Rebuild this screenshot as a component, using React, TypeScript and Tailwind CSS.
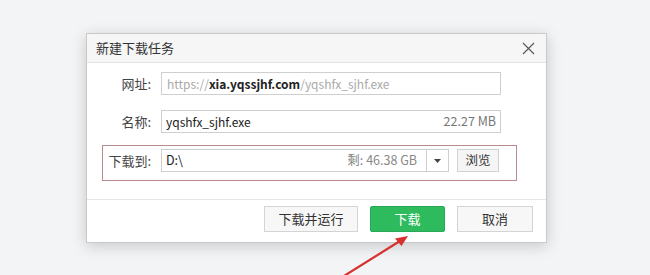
const font = {
  fontFamily: '"Noto Sans CJK SC", "Microsoft YaHei", "Noto Sans", sans-serif',
};

function Row({
  label,
  highlight,
  children,
  className,
}: {
  label: string;
  highlight?: boolean;
  children: React.ReactNode;
  className?: string;
}) {
  return (
    <div
      className={`flex h-[36px] w-[415px] items-start border pt-[3px] ${
        highlight ? "border-[#b98a8f]" : "border-transparent"
      } ${className ?? ""}`}
    >
      <div className="w-[48px] text-right text-[13px] leading-[23px] text-[#444]">
        {label}
      </div>
      <div className="ml-[10px] flex items-center">{children}</div>
    </div>
  );
}

export default function App() {
  return (
    <div
      className="relative h-[275px] w-[650px] overflow-hidden bg-[#f3f4f6] pl-[86px] pt-[33px]"
      style={font}
    >
      <div className="flex h-[210px] w-[461px] flex-col border border-[#c9c9c9] bg-white shadow-[0_3px_14px_rgba(0,0,0,0.18)]">
        {/* title bar */}
        <div className="flex h-[29px] shrink-0 items-center justify-between border-b border-[#e3e3e3] bg-[#f6f6f6] pl-[9px] pr-[11px]">
          <span className="text-[13px] text-[#333]">新建下载任务</span>
          <svg width="13" height="13" viewBox="0 0 13 13" className="text-[#555]">
            <path d="M1 1L12 12M12 1L1 12" stroke="currentColor" strokeWidth="1.1" />
          </svg>
        </div>

        {/* body */}
        <div className="flex-1 px-[15px] pt-[5px]">
          <Row label="网址:">
            <div className="flex h-[23px] w-[340px] items-center border border-[#cfcfcf] px-[5px] text-[12px] text-[#aaa]">
              https://
              <span className="font-semibold text-[#222]">xia.yqssjhf.com</span>
              /yqshfx_sjhf.exe
            </div>
          </Row>
          <Row label="名称:" className="mt-[2px]">
            <div className="flex h-[23px] w-[340px] items-center justify-between border border-[#cfcfcf] px-[4px] text-[12px] text-[#222]">
              <span>yqshfx_sjhf.exe</span>
              <span className="text-[12.5px] text-[#777]">22.27 MB</span>
            </div>
          </Row>
          <Row label="下载到:" highlight className="mt-[3px]">
            <div className="flex h-[23px] w-[288px] items-center border border-[#cfcfcf] text-[12.5px]">
              <span className="flex-1 pl-[4px] text-[#222]">D:\</span>
              <span className="pr-[9px] text-[#888]">剩: 46.38 GB</span>
              <div className="flex h-full w-[22px] items-center justify-center border-l border-[#cfcfcf]">
                <svg width="7" height="4" viewBox="0 0 7 4">
                  <path d="M0 0H7L3.5 4Z" fill="#444" />
                </svg>
              </div>
            </div>
            <div className="ml-[8px] flex h-[23px] w-[42px] items-center justify-center border border-[#d2d2d2] bg-[#f5f5f5] text-[12.5px] text-[#333]">
              浏览
            </div>
          </Row>
        </div>

        {/* footer */}
        <div className="flex h-[43px] shrink-0 items-start justify-end gap-[12px] border-t border-[#e6e6e6] pr-[13px] pt-[6px]">
          <button className="h-[26px] w-[94px] border border-[#d4d4d4] bg-[#f7f7f7] text-[13px] text-[#333]">
            下载并运行
          </button>
          <button className="h-[26px] w-[75px] rounded-[2px] border border-[#28a955] bg-[#2dbb5e] text-[13px] text-white">
            下载
          </button>
          <button className="h-[26px] w-[76px] border border-[#d4d4d4] bg-[#f7f7f7] text-[13px] text-[#333]">
            取消
          </button>
        </div>
      </div>

      {/* red annotation arrow */}
      <svg
        className="absolute left-0 top-0"
        width="650"
        height="275"
        viewBox="0 0 650 275"
      >
        <line x1="344" y1="276" x2="400" y2="241" stroke="#d8302e" strokeWidth="2.2" />
        <path d="M408 236L395 238.5L401.5 246Z" fill="#d8302e" />
      </svg>
    </div>
  );
}
